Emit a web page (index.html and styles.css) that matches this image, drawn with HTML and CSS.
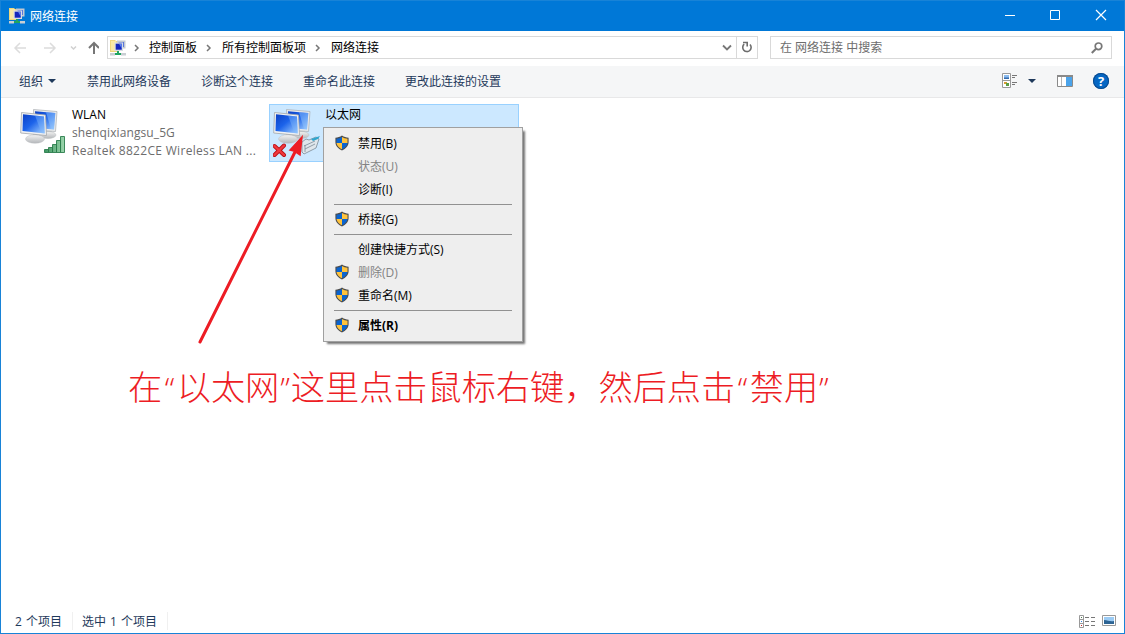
FILE: index.html
```html
<!DOCTYPE html>
<html lang="zh-CN">
<head>
  <meta charset="UTF-8">
  <title>网络连接</title>
  <meta name="viewport" content="width=device-width, initial-scale=1.0">
  <link rel="stylesheet" href="styles.css">
</head>
<body>
  <!-- shared icons -->
  <svg class="defs" width="0" height="0">
    <defs>
      <linearGradient id="screen" x1="0" y1="0" x2="1" y2="1">
        <stop offset="0" stop-color="#0b3fc4"/>
        <stop offset="0.45" stop-color="#1c63ea"/>
        <stop offset="1" stop-color="#a8d4ff"/>
      </linearGradient>
      <linearGradient id="stand" x1="0" y1="0" x2="0" y2="1">
        <stop offset="0" stop-color="#f4f4f4"/>
        <stop offset="1" stop-color="#b4b7ba"/>
      </linearGradient>
      <linearGradient id="bars" x1="0" y1="0" x2="1" y2="0">
        <stop offset="0" stop-color="#3c9560"/>
        <stop offset="1" stop-color="#9bd5ac"/>
      </linearGradient>
    </defs>
    <symbol id="shield" viewBox="0 0 16 16">
      <path d="M8 .6C6 2 3.700 2.600 1.400 2.700V7c0 4 2.800 6.700 6.600 8.500 3.800-1.800 6.600-4.500 6.600-8.500V2.700C12.300 2.600 10 2 8 .6z" fill="#4d4d4d"/>
      <path d="M8 2C6.400 3 4.500 3.600 2.500 3.800V8H8z" fill="#0a64d0"/>
      <path d="M8 2c1.600 1 3.500 1.600 5.500 1.800V8H8z" fill="#ffc33c"/>
      <path d="M2.500 8c.4 3 2.700 4.900 5.500 6.300V8z" fill="#ffc33c"/>
      <path d="M13.500 8c-.4 3-2.700 4.900-5.500 6.300V8z" fill="#0a64d0"/>
    </symbol>
    <symbol id="monitors" viewBox="0 0 50 50">
      <path d="M26 21h5l1 4h-6z" fill="#c4c7ca"/>
      <ellipse cx="28" cy="27" rx="8" ry="3.500" fill="url(#stand)" stroke="#b9bcbf" stroke-width=".5"/>
      <path d="M13.500 1.500 37 3.500 35.500 23.500 14 22z" fill="#e9ebed" stroke="#a9adb1" stroke-width=".7"/>
      <path d="M15 3.200 35.300 5 34 21.500 16 20z" fill="url(#screen)"/>
      <path d="M26 4.200 35.300 5 34 21.500 31 21z" fill="#8dc1fb" opacity=".5"/>
      <path d="M13 25h7l1 5h-8z" fill="#c4c7ca"/>
      <ellipse cx="15" cy="31" rx="9.500" ry="4.200" fill="url(#stand)" stroke="#bcbfc2" stroke-width=".5"/>
      <path d="M1.500 4.500 25.500 7 26.500 27.500.7 25z" fill="#f1f2f3" stroke="#a3a7ab" stroke-width=".8"/>
      <path d="M3 6.300 24 8.500 24.800 25.500 2.500 23z" fill="url(#screen)"/>
      <path d="M15 7.600 24 8.500 24.800 25.500 21.500 25z" fill="#79b3fa" opacity=".45"/>
    </symbol>
    <symbol id="netfolder" viewBox="0 0 16 16">
      <path d="M0 0h5l1 1h3v11H0z" fill="#f0d77c"/>
      <path d="M1 1h5v10H1z" fill="#fae9a3"/>
      <path d="M7 .5h8.500v8H7z" fill="#c3c9d1"/>
      <path d="M8.500 2h5.500v5H8.500z" fill="#5a78dc"/>
      <path d="M4.500 2.500h8.500v8.500H4.500z" fill="#d9dde3"/>
      <path d="M5.700 3.700h6.100v6H5.700z" fill="#1527bd"/>
      <path d="M9 3.700h2.800v5z" fill="#5f83ef"/>
      <path d="M7 11h2v2H7zM5 13h6v2H5z" fill="#20a561"/>
      <path d="M0 13h5v2.500H0zM11 13h5v2.500h-5z" fill="#c9ced3"/>
    </symbol>
  </svg>

  <div class="window">
    <div class="titlebar">
      <svg class="app-icon"><use href="#netfolder"/></svg>
      <span class="title">网络连接</span>
      <div class="win-buttons">
        <svg width="46" height="30"><path d="M18 14.500h10" stroke="#fff"/></svg>
        <svg width="45" height="30"><path d="M17.500 9.500h9v9h-9z" fill="none" stroke="#fff"/></svg>
        <svg width="46" height="30"><path d="m18 9 10 10m0-10-10 10" stroke="#fff" stroke-width="1.200"/></svg>
      </div>
    </div>

    <div class="navbar">
      <svg class="arrows" width="98" height="33" fill="none" stroke-width="1.500">
        <path d="M25 17H14m5-5-5 5 5 5M43 17h11m-5-5 5 5-5 5" stroke="#dcdcdc"/>
        <path d="m70 15.500 2.500 2.500 2.500-2.500" stroke="#d0d0d0"/>
        <path d="M93 23V12m-5 5 5-5 5 5" stroke="#767676" stroke-width="2"/>
      </svg>
      <div class="address">
        <svg class="addr-icon"><use href="#netfolder"/></svg>
        <svg class="crumb-arrow" width="6" height="8"><path d="m1 1 3 3-3 3"/></svg>
        <span class="crumb">控制面板</span>
        <svg class="crumb-arrow" width="6" height="8"><path d="m1 1 3 3-3 3"/></svg>
        <span class="crumb">所有控制面板项</span>
        <svg class="crumb-arrow" width="6" height="8"><path d="m1 1 3 3-3 3"/></svg>
        <span class="crumb">网络连接</span>
        <svg class="addr-drop" width="10" height="8"><path d="m1 1.500 4 4 4-4" fill="none" stroke="#777" stroke-width="1.800"/></svg>
        <div class="refresh">
          <svg width="12" height="13"><path d="M3.200 3.200A4.200 4.200 0 1 0 9 3.500M2 1.500h4.200v4" fill="none" stroke="#6d6d6d" stroke-width="1.600"/></svg>
        </div>
      </div>
      <div class="search">
        <span>在 网络连接 中搜索</span>
        <svg width="12" height="12"><circle cx="7.500" cy="4.300" r="3.300" fill="none" stroke="#777" stroke-width="1.700"/><path d="M5 6.800.8 11" stroke="#777" stroke-width="2"/></svg>
      </div>
    </div>

    <div class="toolbar">
      <span class="tool organize">组织<i class="caret"></i></span>
      <span class="tool">禁用此网络设备</span>
      <span class="tool">诊断这个连接</span>
      <span class="tool">重命名此连接</span>
      <span class="tool">更改此连接的设置</span>
      <div class="tool-right">
        <svg width="16" height="16">
          <path d="M.5.500h8v14h-8zM.5 7.500h8" fill="#fff" stroke="#999"/>
          <path d="M2 2h5v4H2z" fill="#8bbcf0"/><path d="M2 4.500h5V6H2z" fill="#356bad"/>
          <path d="M2 9h3v2H2z" fill="#d79c32"/><path d="M4 10h3v3H4z" fill="#5c9d43"/>
          <path d="M10 2.500h5M10 4.500h3M10 9.500h5M10 11.500h3" stroke="#777"/>
        </svg>
        <i class="caret"></i>
        <svg class="pane-icon" width="16" height="12">
          <path d="M.5.500h15v11H.5z" fill="#fff" stroke="#8a8a8a"/><path d="M0 0h16v2H0z" fill="#8a8a8a"/>
          <path d="M4.500 2v9" stroke="#b5b5b5"/><path d="M9 2h6v9H9z" fill="#4ba3ea"/>
        </svg>
        <div class="help">?</div>
      </div>
    </div>

    <div class="content">
      <div class="tile">
        <svg class="tile-icon" width="50" height="50">
          <use href="#monitors"/>
          <g fill="url(#bars)" stroke="#2b7d4d" stroke-width=".9">
            <path d="M24.500 41.500h4v3h-4zM28.500 39.500h4v5h-4zM32.500 36.500h4v8h-4zM36.500 32.500h4v12h-4zM40.500 28.500h4v16h-4z"/>
          </g>
        </svg>
        <div class="tile-text">
          <div class="name">WLAN</div>
          <div class="sub">shenqixiangsu_5G</div>
          <div class="sub device">Realtek 8822CE Wireless LAN ...</div>
        </div>
      </div>
      <div class="tile selected">
        <svg class="tile-icon" width="50" height="50">
          <use href="#monitors"/>
          <path d="m29 34 4-3 3 1 7-3 3 2-3 9-12 6-2-2z" fill="#dfe6ec" stroke="#7b8a97" stroke-width=".8"/>
          <path d="m31 38 11-5M32 41l10-5M32 37v7" stroke="#7b8a97" stroke-width=".8"/>
          <path d="m38 31 9-3-2 3-5 2z" fill="#2fa6cf"/>
          <path d="m1.500 38 9.500 9m0-9.500-9.500 9.500" stroke="#b80f16" stroke-width="4" stroke-linecap="round"/>
          <path d="m1.500 38 9.500 9m0-9.500-9.500 9.500" stroke="#f1383d" stroke-width="2.400" stroke-linecap="round"/>
        </svg>
        <div class="tile-text">
          <div class="name">以太网</div>
        </div>
      </div>

      <div class="menu">
        <div class="item"><svg><use href="#shield"/></svg>禁用(B)</div>
        <div class="item disabled">状态(U)</div>
        <div class="item">诊断(I)</div>
        <div class="sep"></div>
        <div class="item"><svg><use href="#shield"/></svg>桥接(G)</div>
        <div class="sep"></div>
        <div class="item">创建快捷方式(S)</div>
        <div class="item disabled"><svg><use href="#shield"/></svg>删除(D)</div>
        <div class="item"><svg><use href="#shield"/></svg>重命名(M)</div>
        <div class="sep"></div>
        <div class="item default"><svg><use href="#shield"/></svg>属性(R)</div>
      </div>

      <svg class="pointer" width="120" height="215">
        <path d="M9 209 104 19" stroke="#ed1c24" stroke-width="3" stroke-linecap="round"/>
        <path d="M111 4 99 17l4 1 6 4z" fill="#ed1c24" stroke="#ed1c24" stroke-width="1.500"/>
      </svg>
      <div class="note">在<span class="q open">“</span>以太网<span class="q">”</span>这里点击鼠标右键，然后点击<span class="q open">“</span>禁用<span class="q">”</span></div>
    </div>

    <div class="statusbar">
      <span class="status">2 个项目</span>
      <span class="status">选中 1 个项目</span>
      <div class="views">
        <svg width="17" height="13">
          <path d="M.5.500h4v12h-4zM.5 4.500h4M.5 8.500h4" fill="#fff" stroke="#999"/>
          <path d="M2 2h1v1H2z" fill="#4d7e4d"/><path d="M2 6h1v1H2z" fill="#3385e0"/><path d="M2 10h1v1H2z" fill="#c22"/>
          <path d="M6 2.500h4M12 2.500h4M6 6.500h4M12 6.500h4M6 10.500h4M12 10.500h4" stroke="#777"/>
        </svg>
        <svg width="14" height="12">
          <path d="M.5.500h13v10H.5z" fill="#fff" stroke="#999"/>
          <path d="M2 2h10v7H2z" fill="#9cccf5"/><path d="M2 5c4 0 6 2 10 1v3H2z" fill="#2d6494"/>
        </svg>
      </div>
    </div>
  </div>
</body>
</html>
```
FILE: styles.css
```css
* {
  box-sizing: border-box;
}
body {
  margin: 0;
  font-family: "Open Sans", "Noto Sans CJK SC", sans-serif;
  font-size: 12px;
  color: #000;
  background: #fff;
}
svg {
  display: block;
  flex: none;
}
.defs {
  position: absolute;
}
.window {
  width: 1125px;
  height: 634px;
  border: 1px solid #1883d7;
  display: flex;
  flex-direction: column;
  overflow: hidden;
  white-space: nowrap;
}
.titlebar {
  height: 30px;
  flex: none;
  background: #0078d7;
  color: #fff;
  display: flex;
  align-items: center;
  padding-left: 8px;
}
.app-icon, .addr-icon {
  width: 16px;
  height: 16px;
}
.title {
  margin-left: 5px;
  padding-bottom: 1px;
}
.win-buttons {
  margin-left: auto;
  display: flex;
}
.navbar {
  height: 35px;
  flex: none;
  display: flex;
  align-items: center;
  padding-bottom: 2px;
}
.address {
  width: 651px;
  height: 23px;
  margin-left: 8px;
  border: 1px solid #d9d9d9;
  display: flex;
  align-items: center;
  padding-left: 2px;
}
.crumb-arrow {
  margin: 1px 10px 0 9px;
  fill: none;
  stroke: #777;
  stroke-width: 1.5;
}
.addr-icon + .crumb-arrow {
  margin-left: 8px;
  margin-right: 9px;
}
.crumb, .search span {
  padding-bottom: 2px;
}
.addr-drop {
  margin-left: auto;
  margin-right: 4px;
}
.refresh {
  width: 21px;
  height: 21px;
  border-left: 1px solid #d9d9d9;
  display: flex;
  align-items: center;
  justify-content: center;
}
.search {
  width: 342px;
  height: 23px;
  margin-left: 12px;
  border: 1px solid #d9d9d9;
  color: #6d6d6d;
  display: flex;
  align-items: center;
  justify-content: space-between;
  padding: 0 8px 0 9px;
}
.toolbar {
  height: 32px;
  flex: none;
  background: #f5f6f7;
  border-bottom: 1px solid #e8e8e9;
  color: #1e395b;
  display: flex;
  align-items: center;
  padding: 0 0 2px 18px;
  gap: 30px;
}
.tool {
  display: flex;
  align-items: center;
}
.organize {
  margin-right: 1px;
}
.caret {
  border: 4px solid transparent;
  border-top-color: #1e395b;
  border-bottom: 0;
}
.tool .caret {
  margin-left: 5px;
}
.tool-right {
  margin-left: auto;
  margin-right: 15px;
  display: flex;
  align-items: center;
}
.tool-right .caret {
  margin-left: 10px;
}
.pane-icon {
  margin-left: 21px;
}
.help {
  width: 16px;
  height: 16px;
  margin-left: 20px;
  border-radius: 50%;
  background: #0567c4;
  box-shadow: inset 0 0 0 1px #0b4a8c;
  color: #fff;
  font-size: 13px;
  font-weight: 700;
  line-height: 16px;
  text-align: center;
}
.content {
  flex: 1;
  position: relative;
  display: flex;
  align-items: flex-start;
  gap: 3px;
  padding: 6px 0 0 15px;
}
.tile {
  width: 250px;
  height: 58px;
  border: 1px solid transparent;
  display: flex;
  padding-left: 3px;
}
.tile.selected {
  background: #cce8ff;
  border-color: #99d1ff;
}
.tile-icon {
  margin-top: 3px;
}
.tile-text {
  margin: 1px 0 0 2px;
  line-height: 18px;
}
.sub {
  color: #6d6d6d;
  letter-spacing: 0.1px;
}
.device {
  letter-spacing: 0.31px;
}
.menu {
  position: absolute;
  left: 322px;
  top: 29px;
  width: 200px;
  height: 215px;
  padding: 4px 2px;
  background: #eee;
  border: 1px solid #a0a0a0;
  box-shadow: 3px 3px 2px -1px rgba(0,0,0,0.55);
}
.item {
  height: 23px;
  padding: 0 0 2px 32px;
  display: flex;
  align-items: center;
}
.item svg {
  width: 16px;
  height: 16px;
  margin-left: -24px;
  margin-right: 8px;
}
.item.disabled {
  color: #838383;
}
.item.default {
  font-weight: 700;
}
.sep {
  height: 1px;
  margin: 3px 8px;
  background: #919191;
}
.pointer {
  position: absolute;
  left: 190px;
  top: 35px;
}
.note {
  position: absolute;
  left: 127px;
  top: 262px;
  color: #ed1c24;
  font-family: "Noto Sans CJK SC", sans-serif;
  font-size: 34.2px;
  font-weight: 300;
  line-height: 50px;
}
.q {
  display: inline-block;
  width: 11.5px;
  font-family: "Open Sans", sans-serif;
  font-size: 32px;
  text-align: center;
}
.q.open {
  width: 14.5px;
}
.statusbar {
  height: 24px;
  flex: none;
  color: #1e395b;
  display: flex;
  align-items: center;
  padding-left: 14px;
  word-spacing: 1px;
}
.status {
  padding-right: 10px;
  margin-right: 9px;
  border-right: 1px solid #f0f0f0;
}
.views {
  margin-left: auto;
  margin-right: 8px;
  display: flex;
  align-items: center;
  gap: 6px;
}
```
